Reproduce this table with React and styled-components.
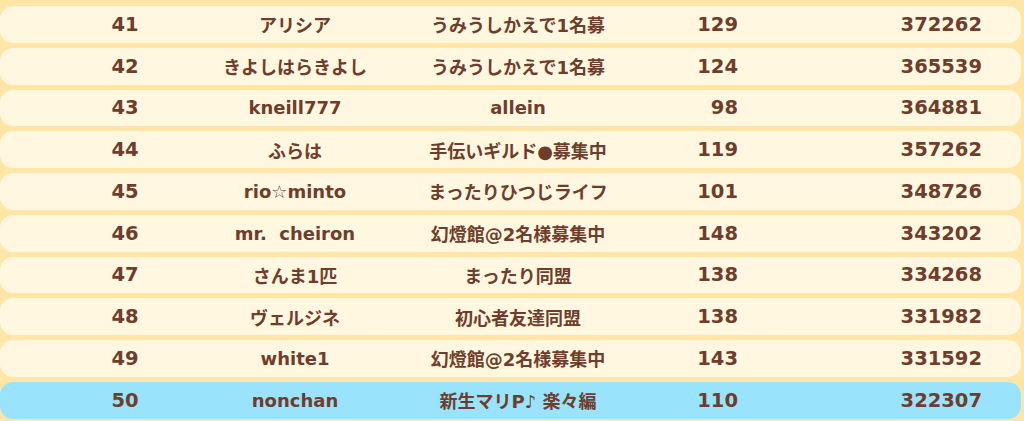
import React from 'react'
import styled, {createGlobalStyle} from 'styled-components'

const GlobalStyle = createGlobalStyle`
    html, body {
        margin: 0;
        padding: 0;
        background: #ffe6a6;
        overflow: hidden;
    }
`

const PAGE_DIV = styled.div`
    width: 1024px;
    height: 421px;
    background: #ffe6a6;
    font-family: "DejaVu Sans", "Noto Sans CJK JP", sans-serif;
    font-weight: bold;
    color: #6f3d2c;
    overflow: hidden;
`

const COLUMNS = '190px 210px 236px 102px 244px'

const HEADER_DIV = styled.div`
    display: grid;
    grid-template-columns: ${COLUMNS};
    width: 1021px;
    height: 20px;
    margin-top: -17px;
    font-size: 14px;
    line-height: 20px;
    align-items: end;
`

const HEAD_SPAN = styled.span`
    text-align: ${props => props.align || 'center'};
    padding-right: ${props => props.pr || 0}px;
    padding-left: ${props => props.pl || 0}px;
`

const LIST_DIV = styled.div`
    display: flex;
    flex-direction: column;
    gap: 5px;
    padding-top: 3px;
`

const ROW_DIV = styled.div`
    display: grid;
    grid-template-columns: ${COLUMNS};
    align-items: center;
    width: 1021px;
    height: 36.75px;
    box-sizing: border-box;
    padding-right: 39px;
    border-radius: 13px;
    background: ${props => props.mine ? '#9ae3fd' : '#fff7df'};
`

const NUM_SPAN = styled.span`
    font-size: 19.5px;
    text-align: ${props => props.align || 'center'};
    padding-left: ${props => props.pl || 0}px;
    white-space: nowrap;
`

const TEXT_SPAN = styled.span`
    font-size: 18px;
    text-align: center;
    white-space: pre;
`

const ROWS = [
    {rank: 41, name: 'アリシア', guild: 'うみうしかえで1名募', count: 129, score: 372262},
    {rank: 42, name: 'きよしはらきよし', guild: 'うみうしかえで1名募', count: 124, score: 365539},
    {rank: 43, name: 'kneill777', guild: 'allein', count: 98, score: 364881},
    {rank: 44, name: 'ふらは', guild: '手伝いギルド●募集中', count: 119, score: 357262},
    {rank: 45, name: 'rio☆minto', guild: 'まったりひつじライフ', count: 101, score: 348726},
    {rank: 46, name: 'mr.  cheiron', guild: '幻燈館@2名様募集中', count: 148, score: 343202},
    {rank: 47, name: 'さんま1匹', guild: 'まったり同盟', count: 138, score: 334268},
    {rank: 48, name: 'ヴェルジネ', guild: '初心者友達同盟', count: 138, score: 331982},
    {rank: 49, name: 'white1', guild: '幻燈館@2名様募集中', count: 143, score: 331592},
    {rank: 50, name: 'nonchan', guild: '新生マリP♪ 楽々編', count: 110, score: 322307, mine: true},
]

function RankRow(props) {
    const r = props.row
    return (
        <ROW_DIV mine={r.mine}>
            <NUM_SPAN pl={60}>{r.rank}</NUM_SPAN>
            <TEXT_SPAN>{r.name}</TEXT_SPAN>
            <TEXT_SPAN>{r.guild}</TEXT_SPAN>
            <NUM_SPAN align='right'>{r.count}</NUM_SPAN>
            <NUM_SPAN align='right'>{r.score}</NUM_SPAN>
        </ROW_DIV>
    )
}

export default function App() {
    return (
        <PAGE_DIV>
            <GlobalStyle/>
            <HEADER_DIV>
                <HEAD_SPAN align='right' pr={73}>順位</HEAD_SPAN>
                <HEAD_SPAN></HEAD_SPAN>
                <HEAD_SPAN>ギルド名</HEAD_SPAN>
                <HEAD_SPAN align='right'>ランク</HEAD_SPAN>
                <HEAD_SPAN align='right' pr={42}>スコア</HEAD_SPAN>
            </HEADER_DIV>
            <LIST_DIV>
                {ROWS.map((row) => <RankRow key={row.rank} row={row}/>)}
            </LIST_DIV>
        </PAGE_DIV>
    )
}
